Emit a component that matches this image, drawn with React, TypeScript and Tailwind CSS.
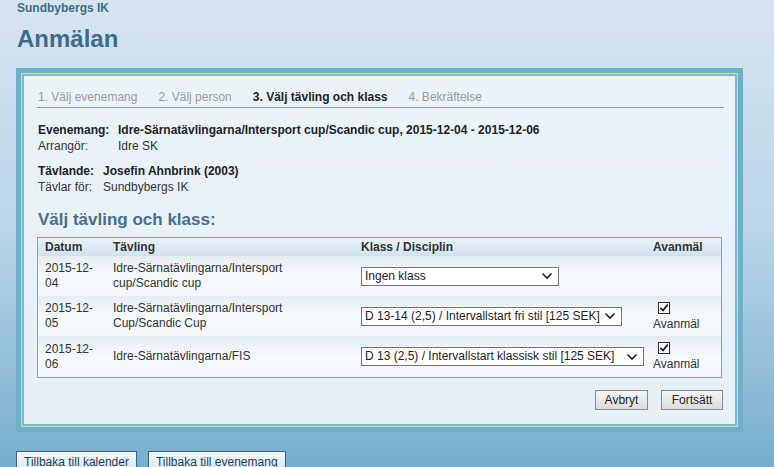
import React from "react";

const Chevron = () => (
  <svg width="12" height="8" viewBox="0 0 12 8" className="shrink-0">
    <path d="M1.5 1.5 L6 6 L10.5 1.5" fill="none" stroke="#222" strokeWidth="1.6" />
  </svg>
);

const Select = ({ text, w }: { text: string; w: string }) => (
  <div className={`${w} h-[19px] bg-white border border-[#767676] flex items-center justify-between pl-[3px] pr-[5px] text-[12px] text-[#222]`}>
    <span className="whitespace-nowrap">{text}</span>
    <Chevron />
  </div>
);

const Check = () => (
  <div className="flex flex-col items-start">
    <div className="ml-[5px] w-[12px] h-[12px] bg-white border border-[#333] flex items-center justify-center">
      <svg width="10" height="10" viewBox="0 0 10 10">
        <path d="M1.5 5 L4 7.5 L8.8 1.5" fill="none" stroke="#111" strokeWidth="1.7" />
      </svg>
    </div>
    <span className="mt-[3px] text-[12px] text-[#333] leading-[14px]">Avanmäl</span>
  </div>
);

const rows = [
  { d1: "2015-12-", d2: "04", t1: "Idre-Särnatävlingarna/Intersport", t2: "cup/Scandic cup", sel: "Ingen klass", w: "w-[198px]", chk: false },
  { d1: "2015-12-", d2: "05", t1: "Idre-Särnatävlingarna/Intersport", t2: "Cup/Scandic Cup", sel: "D 13-14 (2,5) / Intervallstart fri stil [125 SEK]", w: "w-[261px]", chk: true },
  { d1: "2015-12-", d2: "06", t1: "Idre-Särnatävlingarna/FIS", t2: "", sel: "D 13 (2,5) / Intervallstart klassisk stil [125 SEK]", w: "w-[283px]", chk: true },
];

export default function App() {
  return (
    <div
      className="w-[774px] h-[467px] overflow-hidden bg-gradient-to-b from-[#d6e5f0] via-[#b9d5e7] to-[#76aed0] text-[#333]"
      style={{ fontFamily: '"Liberation Sans", Arial, sans-serif' }}
    >
      <div className="pl-[17px] pt-[1px]">
        <div className="text-[12px] font-bold text-[#3e6b8b] leading-[14px]">Sundbybergs IK</div>
        <div className="mt-[10px] text-[24px] font-bold text-[#3e6b8b] leading-[28px]">Anmälan</div>
      </div>
      <div className="ml-[16px] mt-[15px] w-[727px] border-[5px] border-[#6fb0c9]">
        <div className="border border-[#d5df9c]">
          <div className="border-2 border-[#7fb9ce]">
            <div className="bg-gradient-to-b from-[#eaf3fa] to-[#e6f0f8] pl-[13px] pr-[11px] pt-[14px] pb-[14px]">
              {/* steps */}
              <div className="flex gap-[21px] text-[12px] leading-[14px] pb-[3px] border-b border-[#9a9a9a] pl-[1px]">
                <span className="text-[#9a9a9a]">1. Välj evenemang</span>
                <span className="text-[#9a9a9a]">2. Välj person</span>
                <span className="font-bold text-[#222]">3. Välj tävling och klass</span>
                <span className="text-[#9a9a9a]">4. Bekräftelse</span>
              </div>
              {/* info */}
              <div className="mt-[14px] text-[12px] leading-[16px] pl-[1px]">
                <div className="flex">
                  <span className="w-[80px] shrink-0 font-bold text-[#222]">Evenemang:</span>
                  <span className="font-bold text-[#222] whitespace-nowrap">Idre-Särnatävlingarna/Intersport cup/Scandic cup, 2015-12-04 - 2015-12-06</span>
                </div>
                <div className="flex">
                  <span className="w-[80px] shrink-0">Arrangör:</span>
                  <span>Idre SK</span>
                </div>
                <div className="flex mt-[9px]">
                  <span className="w-[65px] shrink-0 font-bold text-[#222]">Tävlande:</span>
                  <span className="font-bold text-[#222]">Josefin Ahnbrink (2003)</span>
                </div>
                <div className="flex">
                  <span className="w-[65px] shrink-0">Tävlar för:</span>
                  <span>Sundbybergs IK</span>
                </div>
              </div>
              <div className="mt-[15px] text-[17px] font-bold text-[#4a6e8a] leading-[20px] pl-[1px]">Välj tävling och klass:</div>
              {/* table */}
              <div className="mt-[7px] w-[685px] border border-[#9a9a9a] text-[12px] leading-[15px]">
                <div className="flex h-[18px] items-center font-bold text-[#333] bg-gradient-to-b from-[#e9f2f8] to-[#cfe2ef]">
                  <div className="w-[68px] pl-[7px]">Datum</div>
                  <div className="w-[248px] pl-[7px]">Tävling</div>
                  <div className="w-[293px] pl-[7px]">Klass / Disciplin</div>
                  <div className="flex-1 pl-[6px]">Avanmäl</div>
                </div>
                {rows.map((r, i) => (
                  <div
                    key={i}
                    className={`flex items-center ${i === 2 ? "h-[41px]" : "h-[40px]"} bg-gradient-to-b from-[#e6edf2] via-[#f6f9fb] to-[#f3f7fa]`}
                  >
                    <div className="w-[68px] pl-[7px]">
                      <div>{r.d1}</div>
                      <div>{r.d2}</div>
                    </div>
                    <div className="w-[248px] pl-[7px]">
                      <div>{r.t1}</div>
                      {r.t2 && <div>{r.t2}</div>}
                    </div>
                    <div className="w-[293px] pl-[7px]">
                      <Select text={r.sel} w={r.w} />
                    </div>
                    <div className="flex-1 pl-[6px]">{r.chk && <Check />}</div>
                  </div>
                ))}
              </div>
              {/* buttons */}
              <div className="mt-[12px] flex justify-end gap-[13px] pr-[1px]">
                <button className="w-[53px] h-[20px] text-[12px] text-[#222] border border-[#8a8a8a] bg-gradient-to-b from-[#f6f6f6] to-[#dcdcdc]">Avbryt</button>
                <button className="w-[62px] h-[20px] text-[12px] text-[#222] border border-[#8a8a8a] bg-gradient-to-b from-[#f6f6f6] to-[#dcdcdc]">Fortsätt</button>
              </div>
            </div>
          </div>
        </div>
      </div>
      <div className="ml-[16px] mt-[19px] flex gap-[11px]">
        <button className="h-[22px] px-[7px] text-[12px] text-[#1f3f5a] border border-[#3e5f7a] bg-gradient-to-b from-[#f2f7fb] to-[#d9e7f1] leading-[20px]">Tillbaka till kalender</button>
        <button className="h-[22px] px-[7px] text-[12px] text-[#1f3f5a] border border-[#3e5f7a] bg-gradient-to-b from-[#f2f7fb] to-[#d9e7f1] leading-[20px]">Tillbaka till evenemang</button>
      </div>
    </div>
  );
}
